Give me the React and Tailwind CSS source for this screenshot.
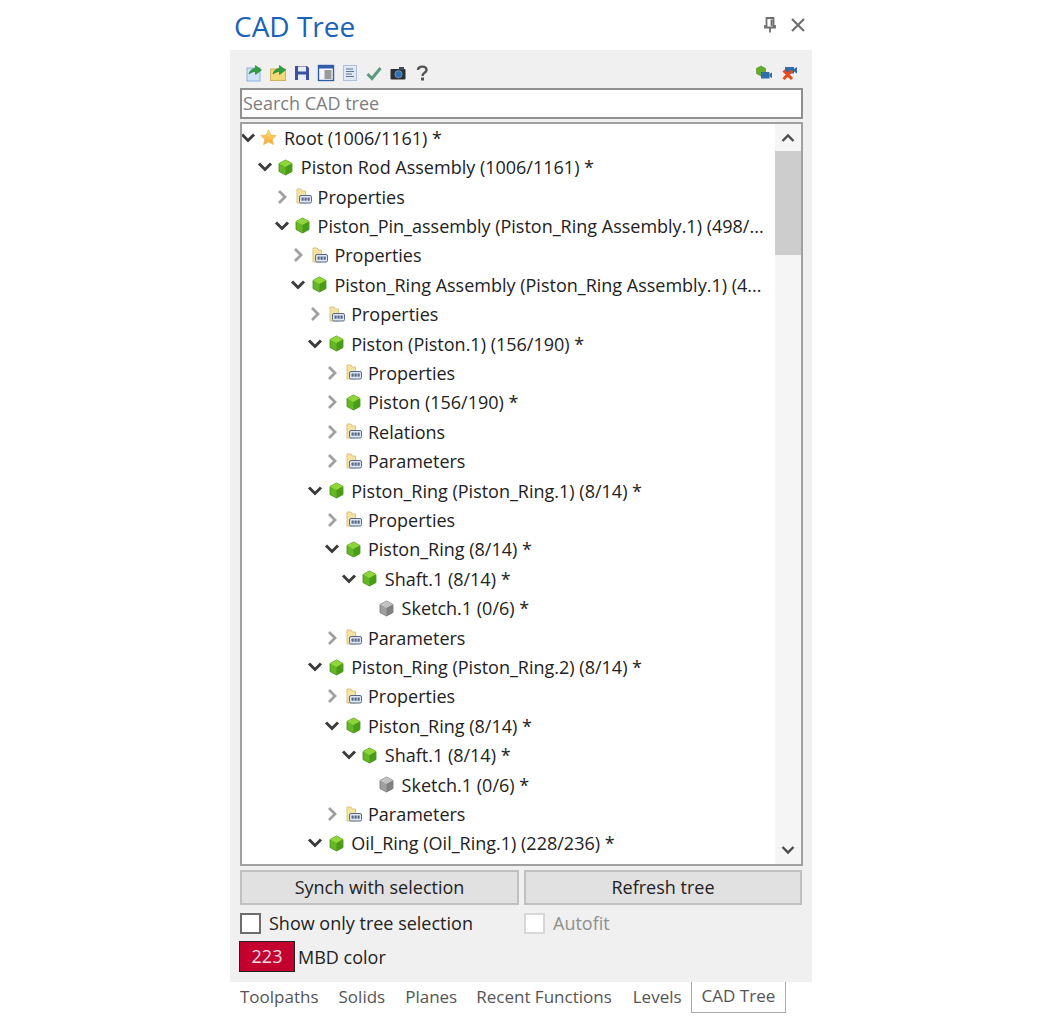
import React from "react";

const F = { fontFamily: '"Open Sans","Noto Sans",sans-serif' };

function Chevron({ open }) {
  return open ? (
    <svg width="16" height="12" viewBox="0 0 16 12" className="block shrink-0">
      <path d="M2 2.5 L8 8.5 L14 2.5" fill="none" stroke="#3c3c3c" strokeWidth="3" />
    </svg>
  ) : (
    <svg width="12" height="16" viewBox="0 0 12 16" className="block shrink-0">
      <path d="M3 2 L9 8 L3 14" fill="none" stroke="#a0a0a0" strokeWidth="2.8" />
    </svg>
  );
}

function Cube({ gray }) {
  const top = gray ? "#c4c4c4" : "#8fd63a";
  const left = gray ? "#a0a0a0" : "#66b725";
  const right = gray ? "#808080" : "#4a9c18";
  const edge = gray ? "#6f6f6f" : "#3f8a14";
  return (
    <svg width="15" height="17" viewBox="0 0 15 17" className="block translate-x-[1px]">
      <path d="M7.5 1 L14 4.5 L14 12.5 L7.5 16 L1 12.5 L1 4.5 Z" fill={left} stroke={edge} strokeWidth="0.8" />
      <path d="M7.5 1 L14 4.5 L7.5 8 L1 4.5 Z" fill={top} />
      <path d="M7.5 8 L14 4.5 L14 12.5 L7.5 16 Z" fill={right} />
    </svg>
  );
}

function Star() {
  return (
    <svg width="17" height="17" viewBox="0 0 17 17" className="block">
      <defs>
        <linearGradient id="starFill" x1="0" y1="0" x2="0" y2="1">
          <stop offset="0" stopColor="#ffdc78" />
          <stop offset="1" stopColor="#f7a92e" />
        </linearGradient>
      </defs>
      <path d="M8.5 1 L10.8 6 L16.2 6.6 L12.2 10.2 L13.3 15.6 L8.5 12.9 L3.7 15.6 L4.8 10.2 L0.8 6.6 L6.2 6 Z" fill="url(#starFill)" stroke="#eeb04a" strokeWidth="0.7" />
    </svg>
  );
}

function FolderProp() {
  return (
    <svg width="16" height="17" viewBox="0 0 16 17" className="block translate-x-[2px]">
      <path d="M1 1 H5 L6 3 H9.5 V15 H1 Z" fill="#f6e3a1" stroke="#d9c47e" strokeWidth="1" />
      <rect x="3.5" y="7.5" width="12" height="7.5" rx="1.5" fill="#dfe7f2" stroke="#56698a" strokeWidth="1" />
      <rect x="5.5" y="9.5" width="2.2" height="3.2" fill="#56698a" />
      <rect x="8.5" y="9.5" width="2.2" height="3.2" fill="#56698a" />
      <rect x="11.5" y="9.5" width="2.2" height="3.2" fill="#56698a" />
    </svg>
  );
}

const rows = [
  [0, "o", "star", "Root (1006/1161) *"],
  [1, "o", "cube", "Piston Rod Assembly (1006/1161) *"],
  [2, "c", "folder", "Properties"],
  [2, "o", "cube", "Piston_Pin_assembly (Piston_Ring Assembly.1) (498/..."],
  [3, "c", "folder", "Properties"],
  [3, "o", "cube", "Piston_Ring Assembly (Piston_Ring Assembly.1) (4..."],
  [4, "c", "folder", "Properties"],
  [4, "o", "cube", "Piston (Piston.1) (156/190) *"],
  [5, "c", "folder", "Properties"],
  [5, "c", "cube", "Piston (156/190) *"],
  [5, "c", "folder", "Relations"],
  [5, "c", "folder", "Parameters"],
  [4, "o", "cube", "Piston_Ring (Piston_Ring.1) (8/14) *"],
  [5, "c", "folder", "Properties"],
  [5, "o", "cube", "Piston_Ring (8/14) *"],
  [6, "o", "cube", "Shaft.1 (8/14) *"],
  [7, "n", "gray", "Sketch.1 (0/6) *"],
  [5, "c", "folder", "Parameters"],
  [4, "o", "cube", "Piston_Ring (Piston_Ring.2) (8/14) *"],
  [5, "c", "folder", "Properties"],
  [5, "o", "cube", "Piston_Ring (8/14) *"],
  [6, "o", "cube", "Shaft.1 (8/14) *"],
  [7, "n", "gray", "Sketch.1 (0/6) *"],
  [5, "c", "folder", "Parameters"],
  [4, "o", "cube", "Oil_Ring (Oil_Ring.1) (228/236) *"],
];

function Row({ level, state, icon, text }) {
  return (
    <div className="flex items-center h-[29.42px] whitespace-nowrap" style={{ paddingLeft: level * 16.8 }}>
      <div className="w-[12px] h-full flex items-center justify-center shrink-0">
        {state !== "n" && <Chevron open={state === "o"} />}
      </div>
      <div className="ml-[4px] w-[20px] flex items-center justify-center shrink-0">
        {icon === "star" && <Star />}
        {icon === "cube" && <Cube />}
        {icon === "gray" && <Cube gray />}
        {icon === "folder" && <FolderProp />}
      </div>
      <span className="ml-[6px] text-[18px] leading-none text-[#222222]">{text}</span>
    </div>
  );
}

const I = ({ children, w = 18 }) => (
  <svg width={w} height="18" viewBox="0 0 18 18" className="block shrink-0">{children}</svg>
);

const Arrow = () => (
  <path d="M4 10 C5 6 8 4.5 10.5 4.5 L10.5 1.5 L16.5 6 L10.5 10.5 L10.5 7.5 C8 7.5 6 8.5 4 10 Z" fill="#2f9e3f" stroke="#1c7a2c" strokeWidth="0.6" />
);

function Toolbar() {
  return (
    <div className="flex items-center h-[30px] pl-[5px] pr-[4px] justify-between">
      <div className="flex items-center gap-[6px]">
        <I><rect x="2" y="4" width="13" height="13" fill="#cfe3f7" stroke="#8fb0d6" /><Arrow /></I>
        <I><rect x="1.5" y="5" width="15" height="11.5" fill="#f0d977" stroke="#cdb45a" /><Arrow /></I>
        <I>
          <path d="M2 2 H14 L16 4 V16 H2 Z" fill="#3f4fa3" />
          <rect x="5" y="2.5" width="8" height="5" fill="#e8ecf8" />
          <rect x="5" y="10.5" width="8" height="5.5" fill="#e8ecf8" />
        </I>
        <I>
          <rect x="1.5" y="1.5" width="15" height="15" fill="#f4f6fa" stroke="#2f5ea8" strokeWidth="1.4" />
          <rect x="1.5" y="1.5" width="15" height="3" fill="#2f5ea8" />
          <rect x="7.5" y="6" width="7" height="9" fill="#9a9a9a" />
        </I>
        <I>
          <rect x="2.5" y="1.5" width="13" height="15" fill="#dfe9f6" stroke="#aebfd8" />
          <path d="M5 5 H12 M5 7.5 H13 M5 10 H11 M5 12.5 H13" stroke="#5d7596" strokeWidth="1" />
        </I>
        <I><path d="M2.5 10 L7 14.5 L15.5 4" fill="none" stroke="#5b9a7d" strokeWidth="3" /></I>
        <I>
          <rect x="1.5" y="5" width="15" height="10.5" rx="1" fill="#2b2f36" />
          <rect x="10" y="3" width="5" height="2.5" fill="#4a4f57" />
          <circle cx="9.5" cy="10.2" r="3.6" fill="#2e6fb5" stroke="#aab4c0" strokeWidth="0.6" />
        </I>
        <I>
          <path d="M5 6 C5 1.5 13.5 1.5 13.5 6 C13.5 9 9.5 8.5 9.5 12" fill="none" stroke="#555" strokeWidth="2.4" />
          <rect x="8" y="13.5" width="3" height="3" fill="#555" />
        </I>
      </div>
      <div className="flex items-center gap-[7px]">
        <I>
          <path d="M6 2 L10.5 4.5 L10.5 9.5 L6 12 L1.5 9.5 L1.5 4.5 Z" fill="#63ad2b" stroke="#3f8a14" strokeWidth="0.6" />
          <rect x="6" y="8" width="8.5" height="6.5" fill="#2f6fa8" />
          <path d="M14.5 10 L17 8.5 V14 L14.5 12.5 Z" fill="#2f6fa8" />
        </I>
        <I>
          <rect x="5" y="3" width="9" height="6.5" fill="#2f6fa8" />
          <path d="M14 5 L17 3 V9.5 L14 7.5 Z" fill="#2f6fa8" />
          <path d="M3.5 6.5 L12 15 M12 6.5 L3.5 15" stroke="#e8481c" strokeWidth="3" />
        </I>
      </div>
    </div>
  );
}

function Scrollbar() {
  return (
    <div className="w-[26px] shrink-0 h-full bg-[#f5f5f5] flex flex-col items-center">
      <div className="h-[27px] w-full flex items-center justify-center">
        <svg width="14" height="10" viewBox="0 0 14 10"><path d="M1.5 8 L7 2.5 L12.5 8" fill="none" stroke="#4a4a4a" strokeWidth="2.4" /></svg>
      </div>
      <div className="w-full h-[104px] bg-[#cdcdcd]" />
      <div className="flex-1" />
      <div className="h-[28px] w-full flex items-center justify-center">
        <svg width="14" height="10" viewBox="0 0 14 10"><path d="M1.5 2 L7 7.5 L12.5 2" fill="none" stroke="#4a4a4a" strokeWidth="2.4" /></svg>
      </div>
    </div>
  );
}

export default function App() {
  return (
    <div className="w-[1042px] h-[1027px] bg-white overflow-hidden pl-[230px]" style={F}>
      <div className="w-[582px]">
        <div className="h-[50px] flex items-start justify-between pl-[4px] pr-[6px]">
          <div className="text-[28px] leading-[38px] pt-[7px] text-[#1a62b8]">CAD Tree</div>
          <div className="flex items-center gap-[13px] pt-[16px]">
            <svg width="14" height="18" viewBox="0 0 14 18">
              <path d="M3.5 2 H10.5 V10 H12 V11.5 H2 V10 H3.5 Z M7 11.5 V16.5 M8.5 3.5 V10" fill="none" stroke="#707070" strokeWidth="1.8" />
            </svg>
            <svg width="16" height="16" viewBox="0 0 16 16">
              <path d="M2 2 L14 14 M14 2 L2 14" stroke="#707070" strokeWidth="2.2" />
            </svg>
          </div>
        </div>
        <div className="bg-[#f0f0f0] h-[932px] pt-[8px] px-[10px]">
          <Toolbar />
          <div className="h-[31px] w-[563px] border-2 border-[#8f8f8f] bg-white flex items-center pl-[1px] text-[18px] text-[#7d7d7d]">Search CAD tree</div>
          <div className="mt-[3px] h-[744px] w-[563px] border-2 border-[#a0a0a0] bg-white flex overflow-hidden">
            <div className="flex-1 min-w-0 overflow-hidden">
              <div className="-mt-[1px]">
                {rows.map((r, i) => (
                  <Row key={i} level={r[0]} state={r[1]} icon={r[2]} text={r[3]} />
                ))}
              </div>
            </div>
            <Scrollbar />
          </div>
          <div className="mt-[4px] flex gap-[5px] w-[562px]">
            <button className="w-[279px] h-[35px] border-2 border-[#c0c0c0] bg-[#e1e1e1] text-[18px] text-[#222222]">Synch with selection</button>
            <button className="w-[278px] h-[35px] border-2 border-[#c0c0c0] bg-[#e1e1e1] text-[18px] text-[#222222]">Refresh tree</button>
          </div>
          <div className="mt-[8px] flex items-center h-[21px]">
            <div className="w-[21px] h-[21px] bg-white border-2 border-[#6d6d6d] shrink-0" />
            <span className="ml-[8px] w-[255px] text-[18px] text-[#222222]">Show only tree selection</span>
            <div className="w-[21px] h-[21px] bg-white border-2 border-[#d8d8d8] shrink-0" />
            <span className="ml-[8px] text-[18px] text-[#8f8f8f]">Autofit</span>
          </div>
          <div className="mt-[7px] -ml-[1px] flex items-center">
            <div className="w-[56px] h-[31px] bg-[#c4002f] border border-[#222222] text-[#f4dfe4] text-[18px] flex items-center justify-center">223</div>
            <span className="ml-[3px] pt-[2px] text-[18px] text-[#222222]">MBD color</span>
          </div>
        </div>
        <div className="flex items-start h-[31px] pl-[10px] text-[17px] text-[#555555]">
          <span className="pt-[2px]">Toolpaths</span>
          <span className="pt-[2px] ml-[20px]">Solids</span>
          <span className="pt-[2px] ml-[20px]">Planes</span>
          <span className="pt-[2px] ml-[19px]">Recent Functions</span>
          <span className="pt-[2px] ml-[21px]">Levels</span>
          <span className="ml-[9px] h-[31px] px-[10px] border border-t-0 border-[#a8a8a8] bg-white pt-[1px]">CAD Tree</span>
        </div>
      </div>
    </div>
  );
}
